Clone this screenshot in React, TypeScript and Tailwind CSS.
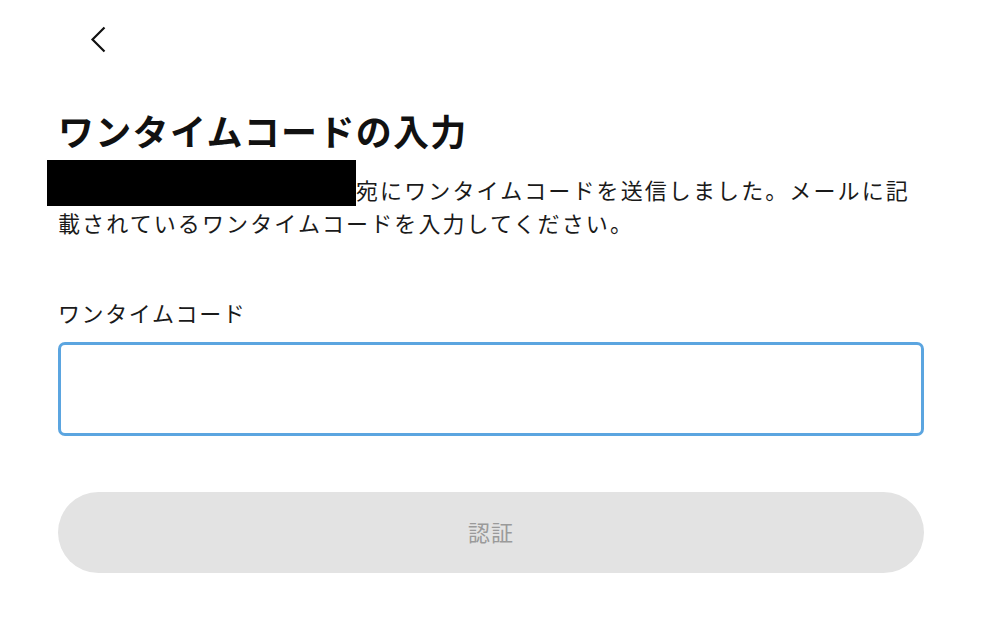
import { useState } from 'react';

const font = { fontFamily: '"Noto Sans CJK JP", "Noto Sans", sans-serif' };

export default function App() {
  const [code, setCode] = useState('');

  return (
    <div className="min-h-[632px] w-[1000px] bg-white text-[#111]" style={font}>
      <div className="ml-[58px] w-[866px]">
        <div className="flex h-[78px] items-center">
          <button type="button" aria-label="戻る" className="ml-[28px] flex h-[32px] w-[24px] items-center justify-center">
            <svg width="18" height="27" viewBox="0 0 18 27" fill="none" aria-hidden>
              <path d="M15.5 1.5 3.5 13.5 15.5 25.5" stroke="#111" strokeWidth="2.2" />
            </svg>
          </button>
        </div>

        <h1 className="mt-[27px] text-[36px] font-bold leading-[50px] tracking-[1.3px]">ワンタイムコードの入力</h1>

        <p className="mt-[5px] text-[22px] leading-[32px] tracking-[2.1px] text-[#1a1a1a]">
          <span className="-ml-[11px] inline-block h-[46px] w-[309px] bg-black align-[-7px]" />
          宛にワンタイムコードを送信しました。メールに記載されているワンタイムコードを入力してください。
        </p>

        <label htmlFor="otp" className="mt-[58px] block text-[22px] leading-[32px] tracking-[1.6px] text-[#1a1a1a]">
          ワンタイムコード
        </label>
        <input
          id="otp"
          value={code}
          onChange={(e) => setCode(e.target.value)}
          inputMode="numeric"
          className="mt-[14px] block h-[94px] w-full rounded-[7px] border-[3px] border-[#5ba5e0] px-4 text-[24px] outline-none"
        />

        <button
          type="button"
          disabled
          className="mt-[56px] block h-[81px] w-full rounded-full bg-[#e3e3e3] pb-[3px] text-[22px] tracking-[1px] text-[#9a9a9a]"
        >
          認証
        </button>
      </div>
    </div>
  );
}
